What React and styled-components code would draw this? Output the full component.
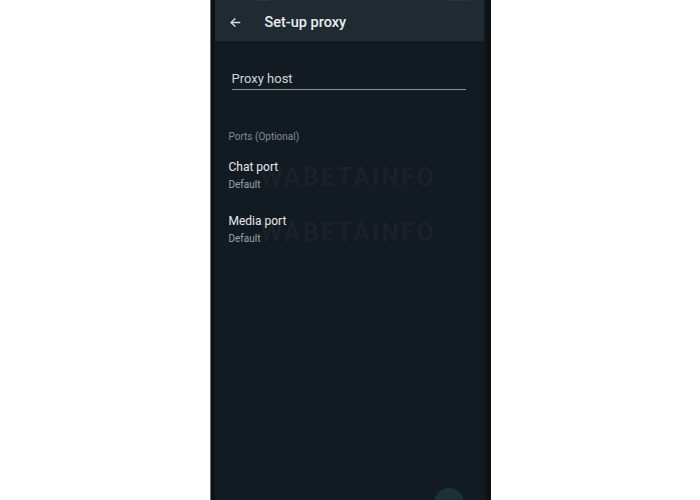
import React from "react";
import styled, { createGlobalStyle } from "styled-components";

const GlobalStyle = createGlobalStyle`
  html, body {
    margin: 0;
    background: #ffffff;
    font-family: Roboto, "Liberation Sans", sans-serif;
  }
`;

const Phone = styled.div`
  position: relative;
  width: 280px;
  height: 500px;
  margin: 0 auto;
  display: flex;
  border-left: 1px solid #6b7075;
  background: #0c1116;
  overflow: hidden;
`;

const Screen = styled.div`
  flex: 1;
  margin: 0 4px 0 4px;
  display: flex;
  flex-direction: column;
  background: #131b22;
  border-right: 3px solid #10161b;
`;

const AppBar = styled.header`
  position: relative;
  height: 41px;
  display: flex;
  align-items: center;
  gap: 23px;
  padding: 4px 0 0 14px;
  box-sizing: border-box;
  background: #1f2a32;
`;

const StatusHint = styled.span`
  position: absolute;
  top: 0;
  left: ${(p) => p.left}px;
  width: ${(p) => p.w}px;
  height: 1px;
  background: #2b363e;
`;

const Title = styled.h1`
  margin: 0;
  font-size: 14.5px;
  font-weight: 500;
  color: #e9edef;
`;

const Body = styled.main`
  position: relative;
  flex: 1;
  display: flex;
  flex-direction: column;
  padding: 29px 18px 0 14px;
`;

const Field = styled.label`
  display: block;
  margin: 0 0 0 3px;
  padding-bottom: 2px;
  border-bottom: 1.5px solid #8a9399;
  font-size: 13px;
  color: #cfd4d7;
  line-height: 17px;
`;

const SectionLabel = styled.div`
  margin-top: 41px;
  font-size: 10px;
  color: #808c94;
`;

const Row = styled.div`
  display: flex;
  flex-direction: column;
  gap: 5px;
  margin-top: ${(p) => p.top}px;
`;

const RowTitle = styled.span`
  font-size: 12px;
  color: #e6e9eb;
  line-height: 14px;
`;

const RowValue = styled.span`
  font-size: 10px;
  color: #9aa4aa;
  line-height: 12px;
`;

const Watermark = styled.span`
  position: absolute;
  left: 46px;
  top: ${(p) => p.top}px;
  font-size: 25px;
  font-weight: 700;
  letter-spacing: 2px;
  color: rgba(255, 255, 255, 0.035);
  pointer-events: none;
`;

const Fab = styled.div`
  position: absolute;
  right: 20px;
  bottom: -18px;
  width: 30px;
  height: 30px;
  border-radius: 50%;
  background: #1c3134;
`;

const BackArrow = () => (
  <svg width="13" height="13" viewBox="0 0 24 24" fill="none" stroke="#d7dcdf" strokeWidth="2.4" strokeLinecap="round" strokeLinejoin="round">
    <path d="M20 12H4" />
    <path d="M11 5l-7 7 7 7" />
  </svg>
);

export default function App() {
  return (
    <>
      <GlobalStyle />
      <Phone>
        <Screen>
          <AppBar>
            <StatusHint left={38} w={18} />
            <StatusHint left={232} w={22} />
            <BackArrow />
            <Title>Set-up proxy</Title>
          </AppBar>
          <Body>
            <Watermark top={122} aria-hidden="true">WABETAINFO</Watermark>
            <Watermark top={177} aria-hidden="true">WABETAINFO</Watermark>
            <Field>Proxy host</Field>
            <SectionLabel>Ports (Optional)</SectionLabel>
            <Row top={18}>
              <RowTitle>Chat port</RowTitle>
              <RowValue>Default</RowValue>
            </Row>
            <Row top={23}>
              <RowTitle>Media port</RowTitle>
              <RowValue>Default</RowValue>
            </Row>
            <Fab />
          </Body>
        </Screen>
      </Phone>
    </>
  );
}
